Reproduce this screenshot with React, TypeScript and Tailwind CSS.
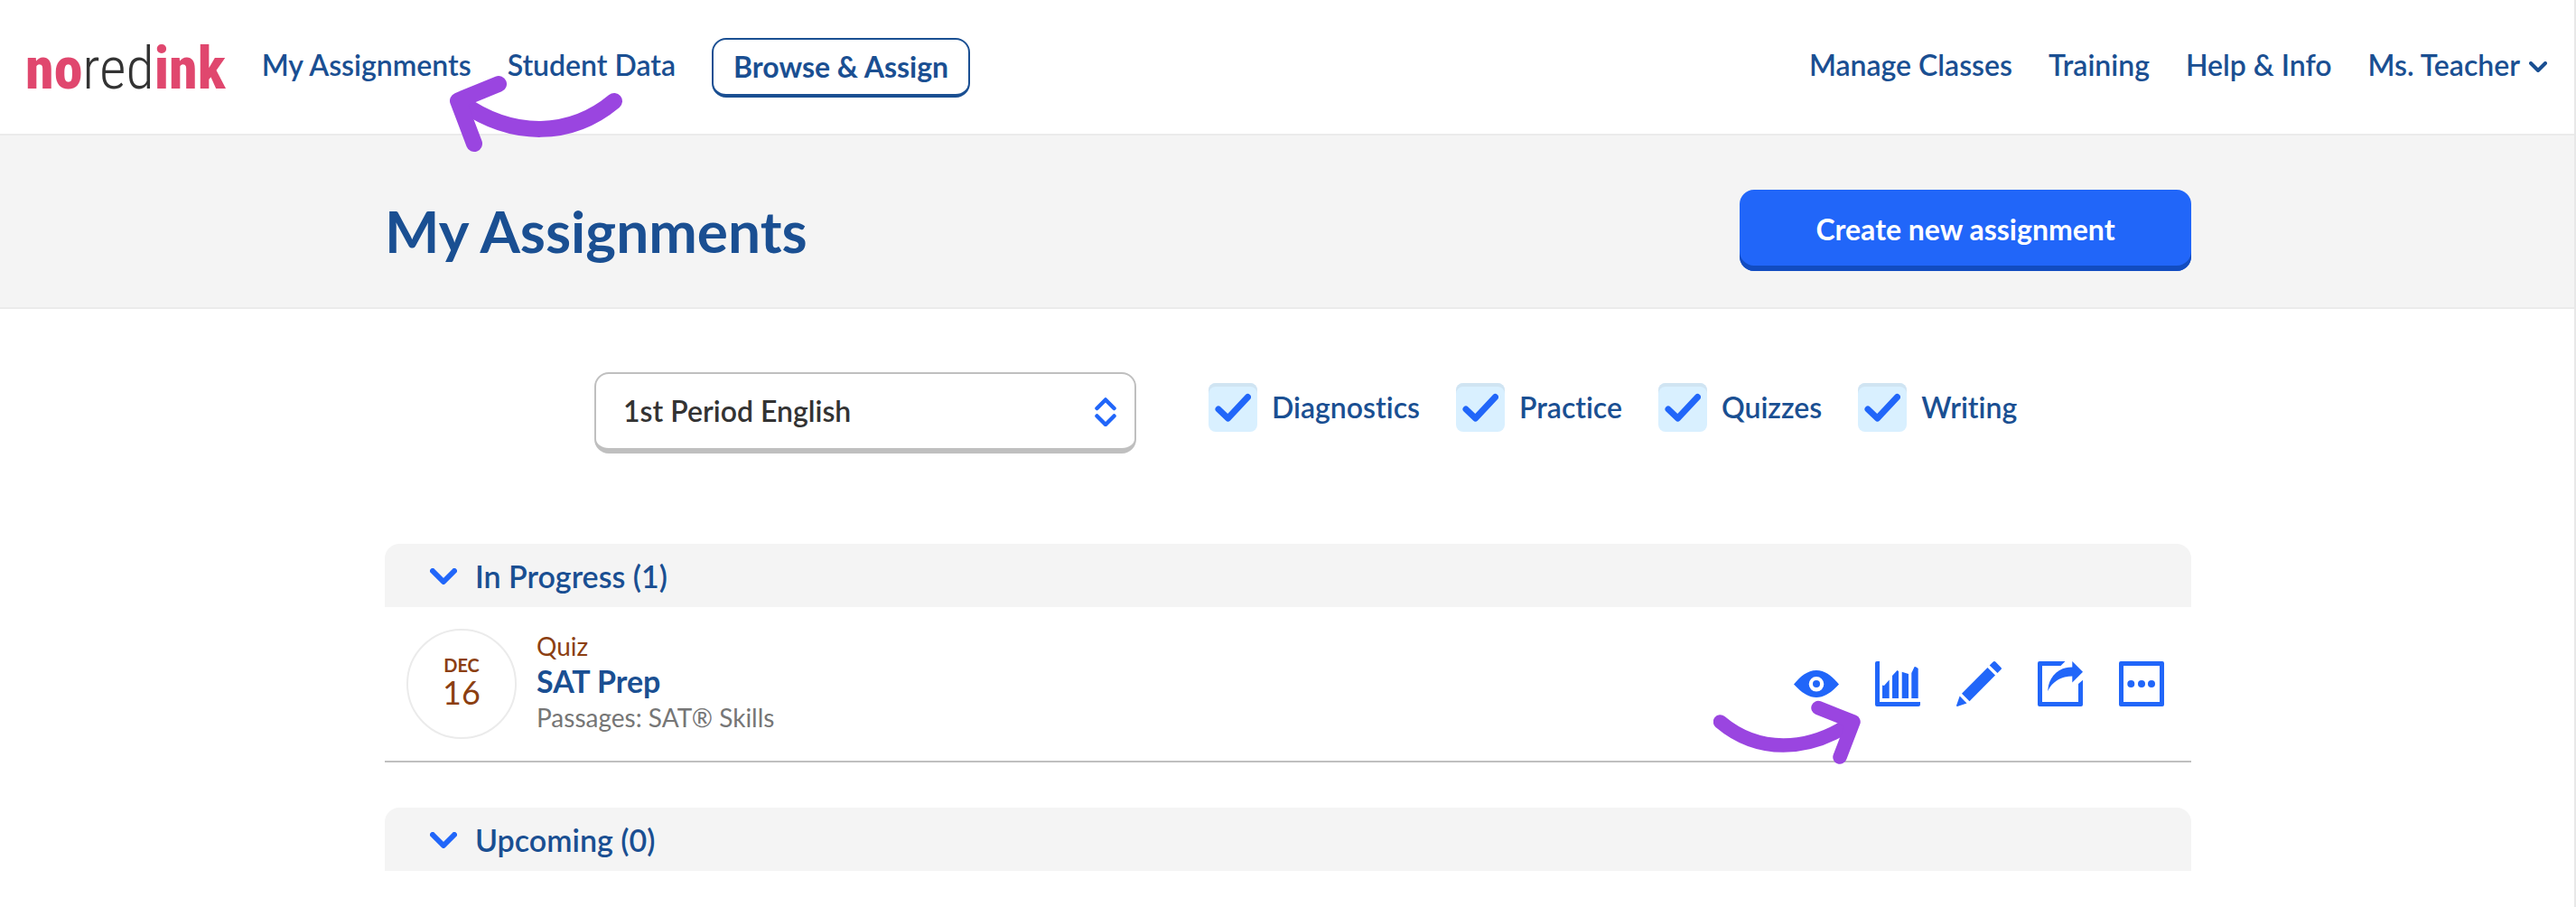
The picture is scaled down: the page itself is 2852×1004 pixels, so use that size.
import React, { useState } from 'react';

const filters = ['Diagnostics', 'Practice', 'Quizzes', 'Writing'];

function Logo() {
  return (
    <a
      href="#home"
      aria-label="noredink"
      className="pt-1 font-['Roboto_Condensed','Roboto',sans-serif] text-[64px] leading-[62px] text-[#e0476e]"
    >
      <span className="font-extrabold">no</span>
      <span className="font-light text-[#333333]">red</span>
      <span className="font-extrabold">ink</span>
    </a>
  );
}

function NavLink({ children }: { children: React.ReactNode }) {
  return (
    <a href="#nav" className="pb-1.5 text-[32px] leading-10 font-semibold whitespace-nowrap">
      {children}
    </a>
  );
}

function Chevron({ className }: { className: string }) {
  return (
    <svg viewBox="0 0 30 18" className={className} fill="none" stroke="currentColor" strokeWidth="6" strokeLinecap="round" strokeLinejoin="round" aria-hidden="true">
      <path d="M3 3l12 12L27 3" />
    </svg>
  );
}

function CurvedArrowLeft() {
  return (
    <svg viewBox="498 83 192 86" className="pointer-events-none absolute top-[83px] left-[498px] w-48" fill="none" stroke="#9a45e0" strokeWidth="18" strokeLinecap="round" strokeLinejoin="round" aria-hidden="true">
      <path d="M680 112C632 152 568 154 510 113" />
      <path d="M552 93L507 111.500L525 159" />
    </svg>
  );
}

function CurvedArrowRight() {
  return (
    <svg viewBox="1897 775 164 72" className="pointer-events-none absolute top-[43px] -left-[89px] w-41" fill="none" stroke="#9a45e0" strokeWidth="15.500" strokeLinecap="round" strokeLinejoin="round" aria-hidden="true">
      <path d="M1904.500 799C1946 834 2001 833 2050 800" />
      <path d="M2013 783.500L2052 799L2037 838" />
    </svg>
  );
}

function EyeIcon() {
  return (
    <svg viewBox="0 0 50 50" className="size-[50px]" fill="currentColor" aria-hidden="true">
      <path fillRule="evenodd" d="M0 25.500C7 17 15 10 25 10s18 7 25 15.500C43 33 35 40 25 40S7 33 0 25.500zM25 17a8.300 8.300 0 1 0 0 16.600a8.300 8.300 0 0 0 0-16.600z" />
      <circle cx="25" cy="25" r="4" />
    </svg>
  );
}

function ChartIcon() {
  return (
    <svg viewBox="0 0 50 50" className="size-[50px]" fill="currentColor" aria-hidden="true">
      <path d="M0 2Q0 0 2 0H5V45H50V48Q50 50 48 50H2Q0 50 0 48z" />
      <path d="M8 26.500L10 27L15.700 20.500V41H8z" />
      <path d="M19 16L24.500 10L26 11V41H19z" />
      <path d="M29.700 11.700L37 14V41H29.700z" />
      <path d="M40.300 13L43.500 6.300Q44.500 5.500 47.700 8V41H40.300z" />
    </svg>
  );
}

function PencilIcon() {
  return (
    <svg viewBox="0 0 50 50" className="size-[50px]" fill="currentColor" aria-hidden="true">
      <path d="M36.700 4.500L40.500 .7Q42 -.5 43.500 .7L49.500 7Q50.500 8 49.500 9L45.500 13z" />
      <path d="M34.500 7L43 15.500L14.500 44.200L6 35.700z" />
      <path d="M3.700 38.500L11.500 46.500L1 50Q0 50 0 49z" />
    </svg>
  );
}

function ShareIcon() {
  return (
    <svg viewBox="0 0 50 50" className="size-[50px]" fill="currentColor" aria-hidden="true">
      <path d="M30.500 0L25.500 5H5V45H45V25L50 20.700V48Q50 50 48 50H2Q0 50 0 48V2Q0 0 2 0z" />
      <path d="M38.300 0L50 11.700L38.300 23.500V16.500C28 16.500 17 21 11.200 33C12 18 22 6.500 38.300 6.500z" />
    </svg>
  );
}

function MoreIcon() {
  return (
    <svg viewBox="0 0 50 50" className="size-[50px]" fill="currentColor" aria-hidden="true">
      <path fillRule="evenodd" d="M2 0H48Q50 0 50 2V48Q50 50 48 50H2Q0 50 0 48V2Q0 0 2 0zM5 5V45H45V5z" />
      <circle cx="13.300" cy="25" r="4" />
      <circle cx="25" cy="25" r="4" />
      <circle cx="36" cy="25" r="4" />
    </svg>
  );
}

const actions = [
  { label: 'Preview', icon: <EyeIcon /> },
  { label: 'Results', icon: <ChartIcon /> },
  { label: 'Edit', icon: <PencilIcon /> },
  { label: 'Share', icon: <ShareIcon /> },
  { label: 'More options', icon: <MoreIcon /> },
];

function FilterCheckbox({ label }: { label: string }) {
  const [checked, setChecked] = useState(true);
  return (
    <label className="flex cursor-pointer items-center gap-4 text-[32px] leading-10 font-semibold">
      <span className="grid size-[54px] place-items-center">
        <input
          type="checkbox"
          checked={checked}
          onChange={(e) => setChecked(e.target.checked)}
          className="col-start-1 row-start-1 size-[54px] appearance-none rounded-lg bg-[#d9f0ff] shadow-[inset_0_4px_0_#d0e4f2]"
        />
        {checked && (
          <svg viewBox="0 0 40 32" className="pointer-events-none col-start-1 row-start-1 w-10 text-[#2166f9]" fill="none" stroke="currentColor" strokeWidth="7" strokeLinecap="round" strokeLinejoin="round" aria-hidden="true">
            <path d="M4 18L14.500 28L36.500 4.500" />
          </svg>
        )}
      </span>
      {label}
    </label>
  );
}

function SectionHeader({ title }: { title: string }) {
  return (
    <h2>
      <button type="button" className="flex w-full items-center gap-5 rounded-t-2xl bg-[#f4f4f4] pt-4 pb-3.5 pl-[50px] text-[34px] leading-10 font-semibold">
        <Chevron className="w-[30px] text-[#2166f9]" />
        {title}
      </button>
    </h2>
  );
}

export default function App() {
  return (
    <div className="relative min-h-screen border-r-2 border-[#e8e8e8] bg-white font-['Lato','Open_Sans',sans-serif] text-[#1a4f92] [font-variant-ligatures:none]">
      <header className="flex items-center justify-between border-b-2 border-[#ebebeb] pt-[42px] pr-[30px] pb-10 pl-7">
        <nav className="flex items-center gap-10">
          <Logo />
          <NavLink>My Assignments</NavLink>
          <NavLink>Student Data</NavLink>
          <button type="button" className="rounded-2xl border-2 border-b-4 border-[#1a4f92] px-[22px] py-[10px] text-[32px] leading-10 font-bold whitespace-nowrap">
            Browse &amp; Assign
          </button>
        </nav>
        <nav className="flex items-center gap-10">
          <NavLink>Manage Classes</NavLink>
          <NavLink>Training</NavLink>
          <NavLink>Help &amp; Info</NavLink>
          <button type="button" className="flex items-center gap-2.5 pb-1.5 text-[32px] leading-10 font-semibold whitespace-nowrap">
            Ms. Teacher
            <Chevron className="mt-1 w-5" />
          </button>
        </nav>
      </header>

      <div className="border-b-2 border-[#ebebeb] bg-[#f4f4f4] pt-[60px] pb-10 pl-0.5">
        <div className="mx-auto flex max-w-[2000px] items-center justify-between">
          <h1 className="pt-0.5 text-[64px] leading-[80px] font-bold">My Assignments</h1>
          <button type="button" className="w-[500px] rounded-2xl bg-[#2166f9] pt-6 pb-[26px] text-[32px] leading-10 font-bold text-white shadow-[inset_0_-6px_0_#124cc0]">
            Create new assignment
          </button>
        </div>
      </div>

      <main className="pt-[70px] pl-0.5">
        <div className="mx-auto max-w-[2000px]">
          <div className="flex items-center gap-20 pl-[232px]">
            <div className="relative">
              <select aria-label="Class" className="h-[90px] w-[600px] appearance-none rounded-2xl border-2 border-b-6 border-[#bfbfbf] bg-white px-[30px] text-[32px] font-semibold text-[#333333]">
                <option>1st Period English</option>
              </select>
              <svg viewBox="0 0 24 32" className="pointer-events-none absolute top-7 right-[22px] w-6 text-[#2166f9]" fill="none" stroke="currentColor" strokeWidth="4.500" strokeLinecap="round" strokeLinejoin="round" aria-hidden="true">
                <path d="M2.500 12L12 2.500L21.500 12M2.500 20.500L12 30L21.500 20.500" />
              </svg>
            </div>
            <div className="flex gap-10 pb-3">
              {filters.map((f) => (
                <FilterCheckbox key={f} label={f} />
              ))}
            </div>
          </div>

          <section className="mt-[100px]">
            <SectionHeader title="In Progress (1)" />
            <article className="flex items-center justify-between border-b-2 border-[#bfbfbf] py-6 pr-[30px] pl-6">
              <div className="flex items-center gap-[22px]">
                <div className="flex size-[122px] flex-col items-center justify-center rounded-full border-2 border-[#ebebeb] pb-1.5 text-[#8c3f12]">
                  <span className="text-[20px] leading-6 font-bold">DEC</span>
                  <span className="text-[36px] leading-9">16</span>
                </div>
                <div className="pb-1">
                  <p className="text-[28px] leading-[38px] text-[#8c3f12]">Quiz</p>
                  <h3 className="text-[34px] leading-10 font-bold">
                    <a href="#sat-prep">SAT Prep</a>
                  </h3>
                  <p className="text-[28px] leading-10 text-[#767676]">Passages: SAT® Skills</p>
                </div>
              </div>
              <div className="relative flex gap-10 text-[#2166f9]">
                {actions.map((a) => (
                  <button key={a.label} type="button" aria-label={a.label}>
                    {a.icon}
                  </button>
                ))}
                <CurvedArrowRight />
              </div>
            </article>
          </section>

          <section className="mt-[50px]">
            <SectionHeader title="Upcoming (0)" />
          </section>
        </div>
      </main>

      <CurvedArrowLeft />
    </div>
  );
}
